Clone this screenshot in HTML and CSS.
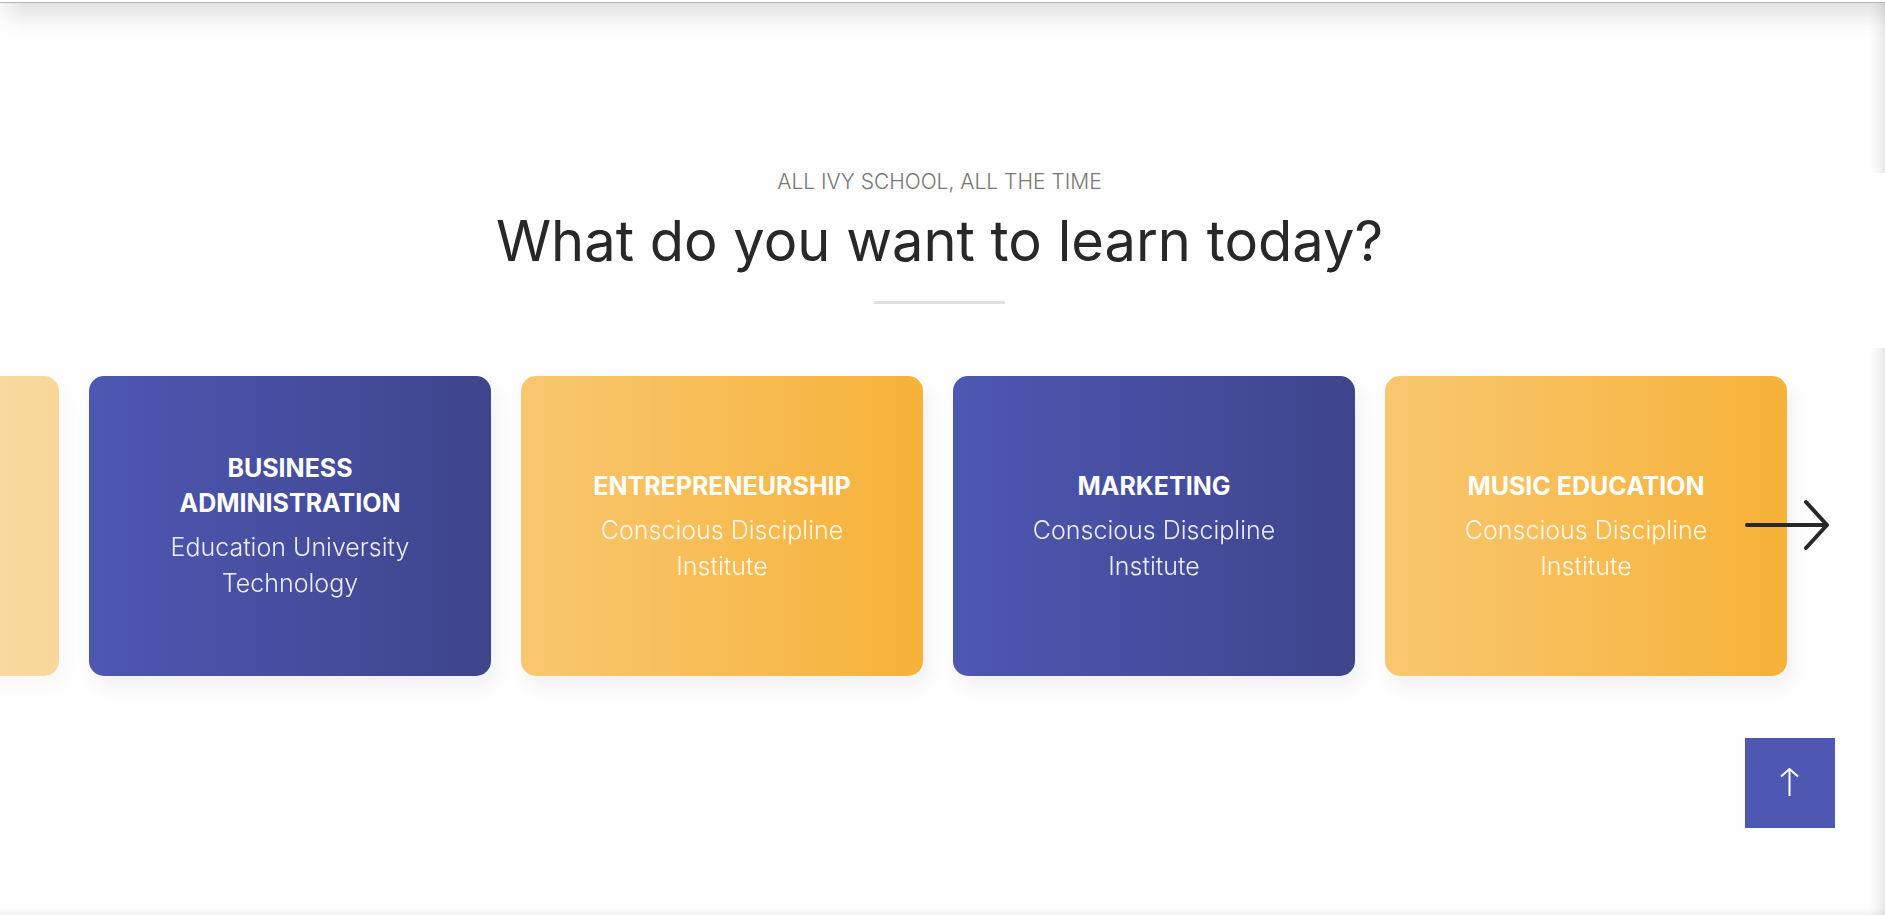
FILE: index.html
```html
<!DOCTYPE html>
<html lang="en">
<head>
<meta charset="utf-8">
<meta name="viewport" content="width=device-width, initial-scale=1">
<title>Courses</title>
<link rel="stylesheet" href="styles.css">
</head>
<body>
<div class="topbar"></div>
<main class="courses">
  <header class="intro">
    <p class="intro-kicker">ALL IVY SCHOOL, ALL THE TIME</p>
    <h1 class="intro-title">What do you want to learn today?</h1>
    <div class="intro-rule"></div>
  </header>
  <section class="carousel" aria-label="Courses">
    <div class="track">
      <div class="card card-gold card-past" aria-hidden="true"></div>
      <a class="card card-blue" href="#">
        <h2 class="card-title">BUSINESS ADMINISTRATION</h2>
        <p class="card-school">Education University Technology</p>
      </a>
      <a class="card card-gold" href="#">
        <h2 class="card-title">ENTREPRENEURSHIP</h2>
        <p class="card-school">Conscious Discipline Institute</p>
      </a>
      <a class="card card-blue" href="#">
        <h2 class="card-title">MARKETING</h2>
        <p class="card-school">Conscious Discipline Institute</p>
      </a>
      <a class="card card-gold" href="#">
        <h2 class="card-title">MUSIC EDUCATION</h2>
        <p class="card-school">Conscious Discipline Institute</p>
      </a>
    </div>
    <button class="next" type="button" aria-label="Next courses">
      <svg width="84" height="52" viewBox="0 0 84 52" fill="none" stroke="#282828" stroke-width="4" stroke-linecap="round" stroke-linejoin="round"><path d="M2 26H81.500M61 3L82 26L61 49"/></svg>
    </button>
  </section>
</main>
<a class="to-top" href="#" aria-label="Back to top">
  <svg width="20" height="30" viewBox="0 0 20 30" fill="none" stroke="#fff" stroke-width="2"><path d="M9.500 28V1M1 8.500L9.500 1L18 8.500"/></svg>
</a>
</body>
</html>
```

FILE: styles.css
```css
* { box-sizing: border-box; }

body {
  margin: 0;
  min-height: 100vh;
  display: flex;
  flex-direction: column;
  background: #fefefe;
  color: #282828;
  font-family: Inter, "Open Sans", sans-serif;
  overflow-x: hidden;
}

h1, h2, p { margin: 0; }

.topbar {
  height: 3px;
  background: #fff;
  border-bottom: 1px solid #b4b4b4;
}

.courses {
  position: relative;
  flex: 1;
  padding-top: 170px;
  background: linear-gradient(to top, rgba(0, 0, 0, .05), transparent) bottom / 100% 8px no-repeat;
}

/* soft edge under the top bar */
.courses::before {
  content: "";
  position: absolute;
  inset: 0 0 auto;
  height: 37px;
  background: linear-gradient(to bottom, rgba(0, 0, 0, .1), rgba(0, 0, 0, .09) 12%, rgba(0, 0, 0, .055) 38%, rgba(0, 0, 0, .02) 60%, rgba(0, 0, 0, .005) 85%, transparent);
  mask-image: linear-gradient(to right, rgba(0, 0, 0, .3), #000 24px);
}

/* soft edge along the right side */
.courses::after {
  content: "";
  position: absolute;
  inset: 0 0 0 auto;
  width: 15px;
  background: linear-gradient(to left, rgba(0, 0, 0, .09), rgba(0, 0, 0, .04) 40%, transparent);
}

.intro {
  position: relative;
  z-index: 1;
  height: 175px;
  padding-right: 6px;
  background: #fefefe;
  text-align: center;
}

.intro-kicker {
  font-size: 21px;
  font-weight: 300;
  line-height: 18px;
  color: #777;
}

.intro-title {
  padding-top: 16px;
  font-size: 56px;
  font-weight: 400;
  line-height: 68px;
}

.intro-rule {
  width: 131px;
  height: 3px;
  margin: 26px auto 0;
  background: #e0e0e0;
}

.carousel {
  position: relative;
  margin-top: -2px;
  padding: 30px 98px 60px 89px;
  overflow: hidden;
}

.track {
  display: grid;
  grid-template-columns: repeat(5, calc((100% - 90px) / 4));
  gap: 30px;
  justify-content: end;
}

.card {
  min-height: 300px;
  padding: 24px 60px;
  display: flex;
  flex-direction: column;
  justify-content: center;
  gap: 8px;
  border-radius: 15px;
  box-shadow: 5px 10px 20px rgba(0, 0, 0, .06);
  color: #fff;
  text-align: center;
  text-decoration: none;
}

.card-blue { background: linear-gradient(to right, #4e57b2, #3e458c); }
.card-gold { background: linear-gradient(to right, #f9c76f, #f6b239); }
.card-past { opacity: .5; }

.card-title {
  font-size: 25px;
  font-weight: 700;
  line-height: 35px;
}

.card-school {
  font-size: 25px;
  font-weight: 300;
  line-height: 36px;
  opacity: .9;
}

.next {
  position: absolute;
  top: 153px;
  right: 56px;
  padding: 0;
  border: 0;
  background: none;
  cursor: pointer;
}

.next svg { display: block; }

.to-top {
  position: fixed;
  right: 50px;
  bottom: 87px;
  width: 90px;
  height: 90px;
  display: flex;
  align-items: center;
  justify-content: center;
  background: #4e57b2;
}
```
